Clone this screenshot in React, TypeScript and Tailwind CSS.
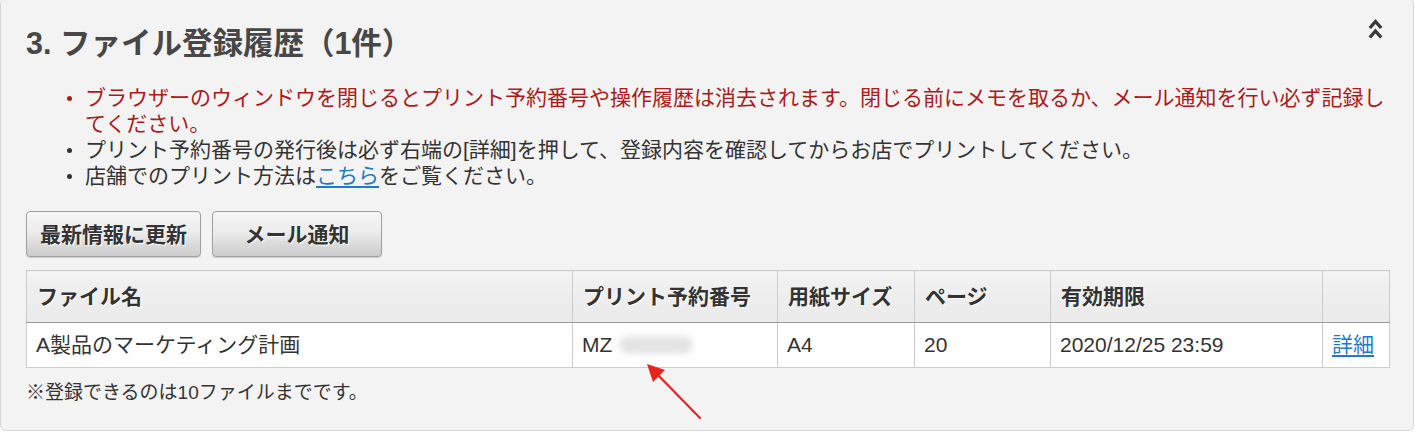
import React from "react";

const font = "font-['Liberation_Sans','Noto_Sans_CJK_JP',sans-serif]";

function Btn({ children, w }: { children: React.ReactNode; w: string }) {
  return (
    <button
      className={`${w} h-[46px] rounded-[4px] border border-[#a0a0a0] bg-[linear-gradient(to_bottom,#f6f6f6_0%,#ececec_45%,#d9d9d9_75%,#cdcdcd_100%)] shadow-[0_1px_1px_rgba(0,0,0,0.15)] text-[21px] font-bold text-[#333] [text-shadow:1px_1px_0_#fff] leading-none`}
    >
      {children}
    </button>
  );
}

export default function App() {
  const th =
    "h-[52px] border border-[#cccccc] border-b-[#999999] px-[10px] text-left align-middle text-[21px] font-bold text-[#333] [text-shadow:1px_1px_0_#fff] bg-[linear-gradient(to_bottom,#f4f4f4_0%,#efefef_30%,#eaeaea_100%)]";
  const td =
    "h-[45px] border border-[#cccccc] border-t-0 px-[9px] text-left align-middle text-[21px] text-[#333] bg-white";
  return (
    <div className={`relative w-[1415px] h-[433px] overflow-hidden bg-white ${font}`}>
      <div className="mt-[-2px] w-[1414px] h-[433px] rounded-[6px] border border-[#d6d6d6] bg-[#f3f3f3] pl-[25px] pr-[23px] pt-[26px]">
        <h2 className="h-[36px] leading-[36px] text-[30.5px] font-bold text-[#474747]">
          3. ファイル登録履歴（1件）
        </h2>
        <ul className="mt-[24px] text-[21px] leading-[26px] text-[#333]">
          <li className="flex text-[#ad1a1a]">
            <span className="ml-[41px] mt-[11px] h-[5px] w-[5px] shrink-0 rounded-full bg-[#ad1a1a]" />
            <span className="ml-[13px] flex-1">
              ブラウザーのウィンドウを閉じるとプリント予約番号や操作履歴は消去されます。閉じる前にメモを取るか、メール通知を行い必ず記録してください。
            </span>
          </li>
          <li className="flex">
            <span className="ml-[41px] mt-[11px] h-[5px] w-[5px] shrink-0 rounded-full bg-[#333]" />
            <span className="ml-[13px] flex-1">
              プリント予約番号の発行後は必ず右端の[詳細]を押して、登録内容を確認してからお店でプリントしてください。
            </span>
          </li>
          <li className="flex">
            <span className="ml-[41px] mt-[11px] h-[5px] w-[5px] shrink-0 rounded-full bg-[#333]" />
            <span className="ml-[13px] flex-1">
              店舗でのプリント方法は
              <a className="text-[#1f7bc7] underline underline-offset-[3px]">こちら</a>
              をご覧ください。
            </span>
          </li>
        </ul>
        <div className="mt-[22px] flex gap-[11px]">
          <Btn w="w-[175px]">最新情報に更新</Btn>
          <Btn w="w-[170px]">メール通知</Btn>
        </div>
        <table className="mt-[13px] w-[1363px] table-fixed border-collapse">
          <colgroup>
            <col className="w-[546px]" />
            <col className="w-[205px]" />
            <col className="w-[137px]" />
            <col className="w-[136px]" />
            <col className="w-[272px]" />
            <col className="w-[67px]" />
          </colgroup>
          <thead>
            <tr>
              <th className={th}>ファイル名</th>
              <th className={th}>プリント予約番号</th>
              <th className={th}>用紙サイズ</th>
              <th className={th}>ページ</th>
              <th className={th}>有効期限</th>
              <th className={th}></th>
            </tr>
          </thead>
          <tbody>
            <tr>
              <td className={td}>A製品のマーケティング計画</td>
              <td className={td}>
                <span className="inline-flex items-center">
                  MZ
                  <span className="ml-[7px] inline-block h-[18px] w-[74px] rounded-full bg-[#e4e4e4] blur-[3px]" />
                </span>
              </td>
              <td className={td}>A4</td>
              <td className={td}>20</td>
              <td className={td}>2020/12/25 23:59</td>
              <td className={td}>
                <a className="text-[#1f7bc7] underline underline-offset-[3px]">詳細</a>
              </td>
            </tr>
          </tbody>
        </table>
        <p className="mt-[12px] text-[19px] leading-[26px] text-[#333]">
          ※登録できるのは10ファイルまでです。
        </p>
      </div>

      <svg
        className="absolute left-[1368px] top-[17px]"
        width="15"
        height="24"
        viewBox="0 0 15 24"
      >
        <path d="M1.8 11 L7.5 4.5 L13.2 11" fill="none" stroke="#3a3a3a" strokeWidth="3.4" strokeLinejoin="miter" />
        <path d="M1.8 20.5 L7.5 14 L13.2 20.5" fill="none" stroke="#3a3a3a" strokeWidth="3.4" strokeLinejoin="miter" />
      </svg>

      <svg className="absolute left-[640px] top-[356px]" width="70" height="70" viewBox="640 356 70 70">
        <line x1="700" y1="418" x2="655" y2="372" stroke="#e8231c" strokeWidth="2.2" strokeLinecap="round" />
        <polygon points="647,364 653,382 665,370" fill="#e8231c" />
      </svg>
    </div>
  );
}
